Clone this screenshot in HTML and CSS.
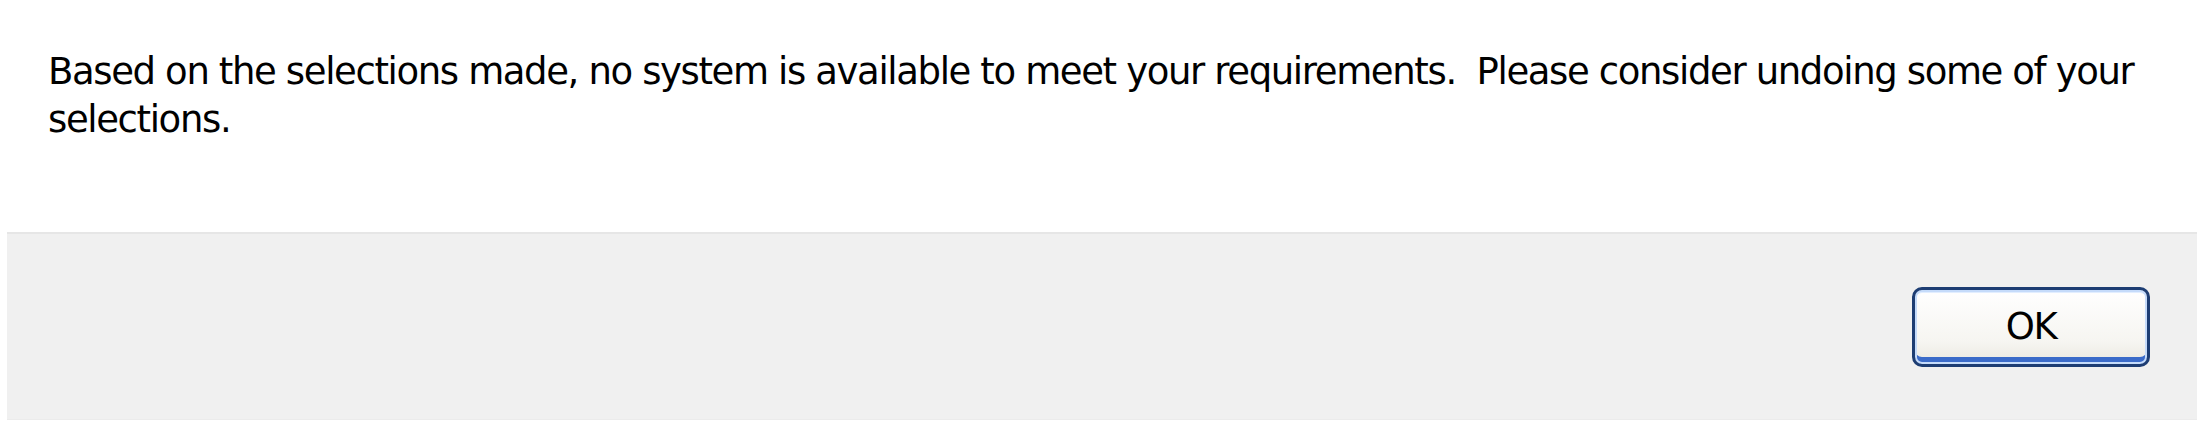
FILE: index.html
```html
<!DOCTYPE html>
<html lang="en">
<head>
  <meta charset="UTF-8" />
  <title>No system available</title>
  <link rel="stylesheet" href="styles.css">
</head>
<body>
  <div class="dialog">
    <p class="message">Based on the selections made, no system is available to meet your requirements.  Please consider undoing some of your selections.</p>

    <div class="button-bar">
      <button class="ok-button" type="button">OK</button>
    </div>
  </div>
</body>
</html>
```

FILE: styles.css
```css
* { box-sizing: border-box; }

body {
  margin: 0;
  background-color: #ffffff;
  color: #000000;
  font-family: "DejaVu Sans", Verdana, sans-serif;
}

.dialog {
  display: flex;
  flex-direction: column;
  height: 431px;
}

.message {
  margin: 0;
  padding: 48px 60px 0 48px;
  font-size: 37px;
  line-height: 48px;
  letter-spacing: -1.37px;
  white-space: pre-wrap;
  height: 232px;
}

.button-bar {
  display: flex;
  justify-content: flex-end;
  align-items: center;
  height: 188px;
  margin: 0 15px 0 7px;
  padding: 0 47px 0 0;
  background-color: #f0f0f0;
  border-top: 2px solid #e6e6e6;
  border-bottom: 1px solid #ebebeb;
}

.ok-button {
  width: 238px;
  height: 80px;
  padding: 0;
  border: 3px solid #1d3d73;
  border-radius: 10px;
  background: linear-gradient(#ffffff, #f6f5f1 70%, #eae8e0);
  box-shadow: inset 0 0 0 2px #c5dbfa, inset 0 -7px 0 #3b6bc9, inset 0 3px 0 #e2eeff;
  font-family: "DejaVu Sans", Verdana, sans-serif;
  font-size: 37px;
  letter-spacing: -1.37px;
  color: #000000;
  cursor: pointer;
}
```
